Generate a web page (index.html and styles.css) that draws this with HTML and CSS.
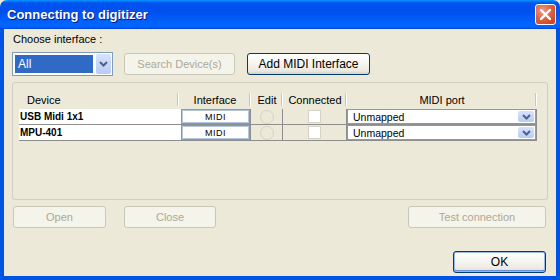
FILE: index.html
```html
<!DOCTYPE html>
<html lang="en">
<head>
    <meta charset="UTF-8">
    <title>Connecting to digitizer</title>
    <link rel="stylesheet" href="styles.css">
</head>
<body>
    <div class="ventana">
        <div class="barra-titulo">
            <span class="titulo">Connecting to digitizer</span>
            <button class="cerrar">
                <svg width="11" height="11" viewBox="0 0 11 11">
                    <path d="M1 1 L10 10 M10 1 L1 10" stroke="white" stroke-width="2.4" stroke-linecap="square"/>
                </svg>
            </button>
        </div>

        <div class="cliente">
            <div class="etiqueta">Choose interface :</div>

            <div class="controles">
                <div class="combo combo-interfaz">
                    <span class="combo-valor seleccionado">All</span>
                    <span class="combo-flecha">
                        <svg width="9" height="6" viewBox="0 0 9 6"><path d="M1 1 L4.5 4.5 L8 1" fill="none" stroke="#4d6185" stroke-width="2"/></svg>
                    </span>
                </div>
                <button class="boton boton-buscar" disabled>Search Device(s)</button>
                <button class="boton boton-agregar">Add MIDI Interface</button>
            </div>

            <div class="grupo">
                <div class="tabla">
                    <div class="cabecera izq">Device</div>
                    <div class="cabecera">Interface</div>
                    <div class="cabecera">Edit</div>
                    <div class="cabecera">Connected</div>
                    <div class="cabecera">MIDI port</div>

                    <div class="celda nombre">USB Midi 1x1</div>
                    <div class="celda"><span class="caja-interfaz">MIDI</span></div>
                    <div class="celda gris"><span class="radio"></span></div>
                    <div class="celda gris"><span class="check"></span></div>
                    <div class="celda">
                        <div class="combo combo-puerto">
                            <span class="combo-valor">Unmapped</span>
                            <span class="combo-flecha">
                                <svg width="9" height="6" viewBox="0 0 9 6"><path d="M1 1 L4.5 4.5 L8 1" fill="none" stroke="#4d6185" stroke-width="2"/></svg>
                            </span>
                        </div>
                    </div>

                    <div class="celda nombre">MPU-401</div>
                    <div class="celda"><span class="caja-interfaz">MIDI</span></div>
                    <div class="celda gris"><span class="radio"></span></div>
                    <div class="celda gris"><span class="check"></span></div>
                    <div class="celda">
                        <div class="combo combo-puerto">
                            <span class="combo-valor">Unmapped</span>
                            <span class="combo-flecha">
                                <svg width="9" height="6" viewBox="0 0 9 6"><path d="M1 1 L4.5 4.5 L8 1" fill="none" stroke="#4d6185" stroke-width="2"/></svg>
                            </span>
                        </div>
                    </div>
                </div>
            </div>

            <div class="acciones">
                <button class="boton boton-abrir" disabled>Open</button>
                <button class="boton boton-cerrar" disabled>Close</button>
                <button class="boton boton-test" disabled>Test connection</button>
            </div>

            <div class="pie">
                <button class="boton boton-ok">OK</button>
            </div>
        </div>
    </div>
</body>
</html>
```

FILE: styles.css
```css
html, body {
    margin: 0;
    padding: 0;
    background: #ece9d8;
}
body {
    font-family: "Liberation Sans", Arial, sans-serif;
    font-size: 11px;
    color: black;
}
.ventana {
    width: 560px;
    height: 280px;
    display: flex;
    flex-direction: column;
}
.barra-titulo {
    height: 29px;
    box-sizing: border-box;
    display: flex;
    align-items: center;
    justify-content: space-between;
    padding: 0 4px 1px 7px;
    border-radius: 7px 7px 0 0;
    background: linear-gradient(to bottom, #0997ff 0%, #0053ee 10%, #0050ee 40%, #0066ff 85%, #0064fb 92%, #005bff 95%, #003dd7 100%);
}
.titulo {
    color: white;
    font-weight: bold;
    font-size: 13px;
    text-shadow: 1px 1px 0 #0a1883;
    padding-top: 1px;
}
.cerrar {
    width: 21px;
    height: 21px;
    padding: 0;
    border: 1px solid white;
    border-radius: 3px;
    background: radial-gradient(circle at 35% 30%, #f39a83 0%, #e26341 45%, #c53d17 100%);
    display: flex;
    align-items: center;
    justify-content: center;
}
.cliente {
    flex: 1;
    display: flex;
    flex-direction: column;
    background: #ece9d8;
    border: 4px solid #0054e3;
    border-top: none;
    padding: 4px 10px 3px 8px;
}
.etiqueta {
    line-height: 13px;
    padding-left: 1px;
}
.controles {
    display: flex;
    align-items: center;
    height: 24px;
    margin-top: 6px;
}
.combo {
    display: flex;
    box-sizing: border-box;
    border: 1px solid #7f9db9;
    background: white;
}
.combo-interfaz {
    width: 101px;
    height: 24px;
    padding: 1px;
}
.combo-valor {
    flex: 1;
    display: flex;
    align-items: center;
    padding-left: 3px;
}
.seleccionado {
    background: #316ac5;
    color: white;
    margin: 1px 3px 1px 1px;
    font-size: 12px;
}
.combo-flecha {
    width: 15px;
    display: flex;
    align-items: center;
    justify-content: center;
    background: linear-gradient(to bottom, #d7e3fc, #b9cbf5);
    border-radius: 2px;
}
.boton {
    font-family: "Liberation Sans", Arial, sans-serif;
    font-size: 11px;
    height: 22px;
    box-sizing: border-box;
    padding: 0;
    border: 1px solid #003c74;
    border-radius: 3px;
    background: linear-gradient(to bottom, #ffffff 0%, #f5f4ef 50%, #ebe8df 85%, #d6d0c5 100%);
    color: black;
}
.boton:disabled {
    border-color: #c9c7ba;
    background: #f5f4ea;
    color: #aca899;
}
.boton-buscar {
    width: 111px;
    margin-left: 11px;
}
.boton-agregar {
    width: 123px;
    margin-left: 12px;
    font-size: 12px;
}
.grupo {
    margin-top: 6px;
    width: 536px;
    height: 118px;
    box-sizing: border-box;
    border: 1px solid #d0d0bf;
    border-radius: 3px;
    padding: 8px 0 0 6px;
}
.tabla {
    display: grid;
    grid-template-columns: 160px 72px 32px 64px 190px;
    grid-template-rows: 18px 16px 16px;
}
.cabecera {
    display: flex;
    align-items: center;
    justify-content: center;
    position: relative;
    font-size: 11px;
}
.cabecera.izq {
    justify-content: flex-start;
    padding-left: 8px;
}
.cabecera::after {
    content: "";
    position: absolute;
    right: 0;
    top: 2px;
    bottom: 3px;
    border-left: 1px solid #cbc7b8;
    border-right: 1px solid #ffffff;
    width: 0;
}
.celda {
    box-sizing: border-box;
    background: white;
    border-bottom: 1px solid #8e8e8e;
    border-right: 1px solid #8e8e8e;
    display: flex;
    align-items: center;
    justify-content: center;
}
.celda.gris {
    background: #ece9d8;
}
.celda.nombre {
    justify-content: flex-start;
    padding-left: 1px;
    font-weight: bold;
    font-size: 10px;
    border-right: none;
}
.caja-interfaz {
    flex: 1;
    align-self: stretch;
    margin-left: 2px;
    box-sizing: border-box;
    border: 1px solid #7f9db9;
    box-shadow: inset 0 0 0 1px #b5c7dc;
    background: white;
    display: flex;
    align-items: center;
    justify-content: center;
    font-size: 9px;
    letter-spacing: 0.5px;
}
.radio {
    width: 14px;
    height: 14px;
    box-sizing: border-box;
    border: 1px solid #d6d3c6;
    border-radius: 50%;
}
.check {
    width: 13px;
    height: 13px;
    box-sizing: border-box;
    background: white;
    border: 1px solid #d6d3c6;
}
.combo-puerto {
    flex: 1;
    align-self: stretch;
    padding: 1px;
    font-size: 10.5px;
}
.combo-puerto .combo-valor {
    padding-left: 4px;
}
.combo-puerto .combo-flecha {
    width: 16px;
}
.acciones {
    display: flex;
    margin-top: 6px;
    padding-left: 1px;
}
.boton-abrir {
    width: 93px;
}
.boton-cerrar {
    width: 92px;
    margin-left: 18px;
}
.boton-test {
    width: 138px;
    margin-left: auto;
}
.pie {
    display: flex;
    justify-content: flex-end;
    margin-top: 23px;
}
.boton-ok {
    width: 93px;
    font-size: 12px;
    box-shadow: inset 0 0 0 1px #98b8ea, inset 0 -1px 0 1px #6b8fe0;
}
```
